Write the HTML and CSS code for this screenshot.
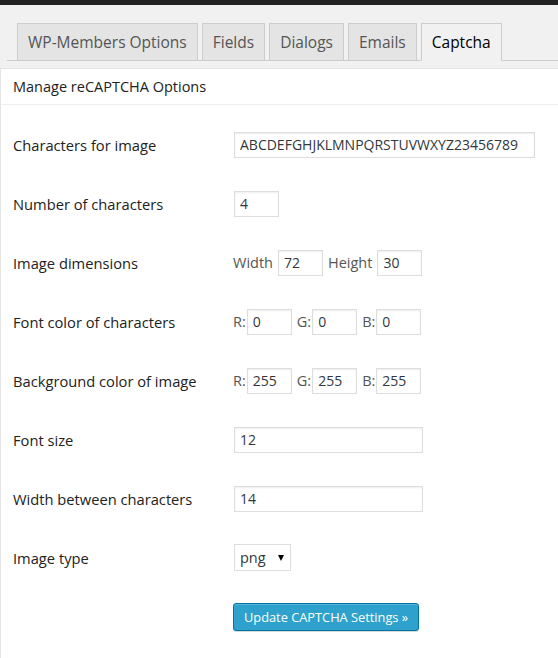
FILE: index.html
```html
<!DOCTYPE html>
<html lang="en">
<head>
<meta charset="utf-8">
<title>WP-Members Captcha</title>
<link rel="stylesheet" href="styles.css">
</head>
<body>
<div class="topbar"></div>
<div class="wrap">
  <nav class="tabs">
    <a class="tab">WP-Members Options</a>
    <a class="tab">Fields</a>
    <a class="tab">Dialogs</a>
    <a class="tab">Emails</a>
    <a class="tab active">Captcha</a>
  </nav>
  <div class="panel">
    <h3 class="panel-title">Manage reCAPTCHA Options</h3>
    <form class="form">
      <div class="row">
        <label class="label">Characters for image</label>
        <div class="field"><input class="input wide" type="text" value="ABCDEFGHJKLMNPQRSTUVWXYZ23456789"></div>
      </div>
      <div class="row">
        <label class="label">Number of characters</label>
        <div class="field"><input class="input small" type="text" value="4"></div>
      </div>
      <div class="row">
        <label class="label">Image dimensions</label>
        <div class="field dims">
          <span class="pre">Width</span><input class="input small" type="text" value="72">
          <span class="pre h">Height</span><input class="input small" type="text" value="30">
        </div>
      </div>
      <div class="row">
        <label class="label">Font color of characters</label>
        <div class="field rgb">
          <span class="pre">R:</span><input class="input small" type="text" value="0">
          <span class="pre">G:</span><input class="input small" type="text" value="0">
          <span class="pre">B:</span><input class="input small" type="text" value="0">
        </div>
      </div>
      <div class="row">
        <label class="label">Background color of image</label>
        <div class="field rgb">
          <span class="pre">R:</span><input class="input small" type="text" value="255">
          <span class="pre">G:</span><input class="input small" type="text" value="255">
          <span class="pre">B:</span><input class="input small" type="text" value="255">
        </div>
      </div>
      <div class="row">
        <label class="label">Font size</label>
        <div class="field"><input class="input medium" type="text" value="12"></div>
      </div>
      <div class="row">
        <label class="label">Width between characters</label>
        <div class="field"><input class="input medium" type="text" value="14"></div>
      </div>
      <div class="row">
        <label class="label">Image type</label>
        <div class="field"><span class="select-wrap"><select class="select"><option>png</option><option>gif</option><option>jpg</option></select></span></div>
      </div>
      <div class="row">
        <span class="label"></span>
        <div class="field"><button type="button" class="button">Update CAPTCHA Settings &raquo;</button></div>
      </div>
    </form>
  </div>
</div>
</body>
</html>
```

FILE: styles.css
```css
* { box-sizing: border-box; }
html, body { margin: 0; padding: 0; }
body {
  background: #f1f1f1;
  font-family: "Open Sans", "Liberation Sans", sans-serif;
  font-size: 14px;
  color: #222;
  overflow: hidden;
  height: 100vh;
}
.topbar { height: 5px; background: #222; }
.wrap { padding-top: 18px; }
.tabs {
  display: flex;
  margin-left: 7px;
  padding-left: 10px;
  border-bottom: 1px solid #ccc;
  gap: 4px;
}
.tab {
  display: block;
  border: 1px solid #ccc;
  border-bottom: none;
  background: #e4e4e4;
  color: #555;
  font-size: 15.5px;
  font-weight: 400;
  line-height: 26px;
  padding: 5px 10px;
  white-space: nowrap;
  text-decoration: none;
}
.tab.active {
  background: #f1f1f1;
  color: #000;
  margin-bottom: -1px;
  border-bottom: 1px solid #f1f1f1;
}
.panel {
  margin-top: 7px;
  background: #fff;
  border: 1px solid #e5e5e5;
  border-right: none;
  border-bottom: none;
  height: calc(100vh - 68px);
  overflow: hidden;
}
.panel-title {
  margin: 0;
  font-size: 14.5px;
  font-weight: 400;
  line-height: 19px;
  padding: 8px 12px;
  border-bottom: 1px solid #eee;
  color: #222;
}
.form { padding-top: 10px; }
.row {
  display: grid;
  grid-template-columns: 233px 1fr;
  align-items: center;
  height: 59px;
}
.label { padding-left: 12px; color: #222; font-size: 14.7px; }
.field { display: flex; align-items: center; }
.input {
  height: 26px;
  border: 1px solid #ddd;
  box-shadow: inset 0 1px 2px rgba(0,0,0,0.07);
  font-family: "Open Sans", "Liberation Sans", sans-serif;
  font-size: 14px;
  color: #32373c;
  padding: 0 5px;
  background: #fff;
  outline: none;
  margin: 0;
}
.wide { width: 301px; }
.small { width: 45px; }
.medium { width: 189px; }
.pre { color: #555; font-size: 14.5px; }
.dims .pre { margin-right: 5px; }
.dims .pre.h { margin-left: 5px; }
.rgb .pre { margin-left: 5px; margin-right: 1px; }
.rgb .pre:first-child { margin-left: -1px; }
.dims .pre:first-child { margin-left: -1px; }
.select-wrap { position: relative; display: inline-block; }
.select {
  appearance: none;
  -webkit-appearance: none;
  width: 57px;
  height: 27px;
  border: 1px solid #ddd;
  background: #fff;
  font-family: "Open Sans", "Liberation Sans", sans-serif;
  font-size: 14.5px;
  color: #32373c;
  padding: 0 5px;
  margin: 0;
  border-radius: 0;
  outline: none;
}
.select-wrap::after {
  content: "";
  position: absolute;
  right: 7px;
  top: 11px;
  border-left: 3px solid transparent;
  border-right: 3px solid transparent;
  border-top: 6px solid #000;
  pointer-events: none;
}
.button {
  margin-left: -1px;
  height: 28px;
  padding: 0 10px 1px;
  background: #2ea2cc;
  border: 1px solid #0074a2;
  border-radius: 3px;
  color: #fff;
  font-family: "Open Sans", "Liberation Sans", sans-serif;
  font-size: 12.8px;
  line-height: 26px;
  box-shadow: inset 0 1px 0 rgba(120,200,230,0.5), 0 1px 0 rgba(0,0,0,0.15);
  cursor: pointer;
}
```
